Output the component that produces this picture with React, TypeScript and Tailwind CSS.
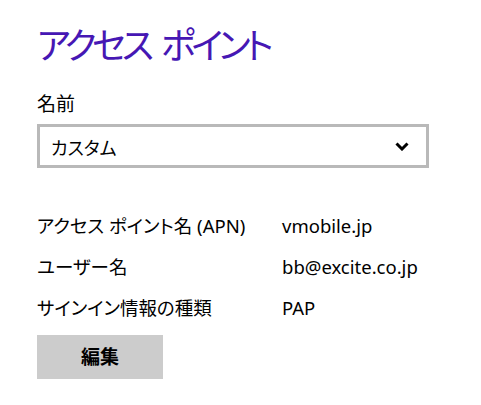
const font = {
  fontFamily: '"Noto Sans", "Noto Sans CJK JP", sans-serif',
};

function Chevron() {
  return (
    <svg width="14" height="9" viewBox="0 0 14 9" fill="none">
      <path d="M1.5 1.5 L7 7 L12.5 1.5" stroke="#000" strokeWidth="3" />
    </svg>
  );
}

const rows = [
  ["アクセス ポイント名 (APN)", "vmobile.jp"],
  ["ユーザー名", "bb@excite.co.jp"],
  ["サインイン情報の種類", "PAP"],
];

export default function App() {
  return (
    <div
      className="h-[405px] w-[481px] overflow-hidden bg-white pl-[37px] text-black [font-feature-settings:'palt']"
      style={font}
    >
      <h1 className="mt-[26px] text-[36px] leading-[40px] font-normal tracking-[-4.5px] text-[#4617b4]">
        アクセス<span className="tracking-[2px]"> </span>ポイント
      </h1>

      <div className="mt-[26px] text-[19px] leading-[24px]">名前</div>

      <div className="mt-[8px] flex h-[44px] w-[392px] items-center justify-between border-[3px] border-[#b9b9b9] pl-[11px] pr-[17px]">
        <span className="pt-[3px] text-[18px] leading-none">カスタム</span>
        <Chevron />
      </div>

      <div className="mt-[37px] flex flex-col">
        {rows.map(([label, value]) => (
          <div key={label} className="flex h-[41px] items-center text-[18.5px]">
            <span className="w-[245px] shrink-0">{label}</span>
            <span>{value}</span>
          </div>
        ))}
      </div>

      <button className="mt-[7px] flex h-[44px] w-[126px] items-center justify-center bg-[#cccccc] text-[19px] font-bold leading-none">
        編集
      </button>
    </div>
  );
}
